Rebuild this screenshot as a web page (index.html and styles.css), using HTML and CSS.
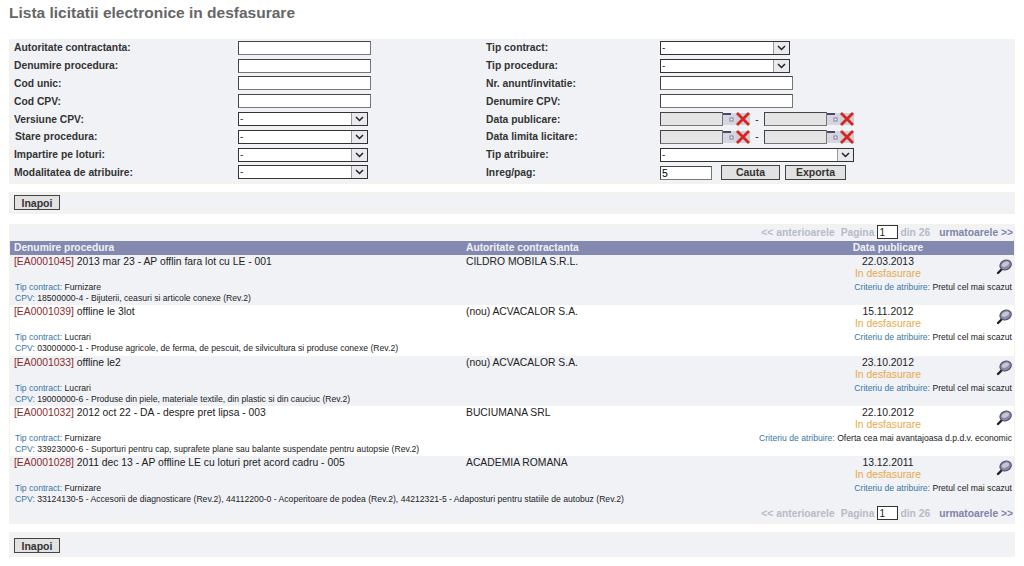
FILE: index.html
```html
<!DOCTYPE html>
<html lang="ro">
<head>
  <meta charset="UTF-8" />
  <title>Lista licitatii electronice in desfasurare</title>
  <link rel="stylesheet" href="styles.css">
</head>
<body>
  <svg class="defs" width="0" height="0">
    <symbol id="lupa" viewBox="0 0 16 16">
      <path d="M6 10 L2 14" stroke="#222" stroke-width="2.4" stroke-linecap="round"/>
      <ellipse cx="9.6" cy="6" rx="5.8" ry="4.8" transform="rotate(-25 9.6 6)" fill="#8c8ca6" stroke="#4f4f66" stroke-width="1.1"/>
      <ellipse cx="9.4" cy="5.2" rx="3.8" ry="2.2" transform="rotate(-25 9.4 5.2)" fill="#c6c7d6"/>
    </symbol>
    <symbol id="sageata" viewBox="0 0 15 12">
      <path d="M4 4 L7.5 7.5 L11 4" fill="none" stroke="#222" stroke-width="1.5"/>
    </symbol>
    <symbol id="cal" viewBox="0 0 13 14">
      <rect x="0" y="1" width="13" height="12" fill="#d6d6e2"/>
      <rect x="0" y="1" width="8" height="2" fill="#46466e"/>
      <rect x="7" y="6" width="3" height="3" fill="#fff" stroke="#7c7c92"/>
    </symbol>
    <symbol id="sterge" viewBox="0 0 14 14">
      <rect x="0" y="1" width="14" height="12" fill="#cfcfd8"/>
      <path d="M1 1 L13 13 M13 1 L1 13" stroke="#d8231f" stroke-width="2.8"/>
    </symbol>
  </svg>

  <h1 class="titlu">Lista licitatii electronice in desfasurare</h1>

  <form class="panou filtre">
    <div class="rand">
      <label>Autoritate contractanta:</label>
      <input class="txt" type="text">
      <label>Tip contract:</label>
      <div class="sel"><select><option>-</option></select><svg><use href="#sageata"/></svg></div>
    </div>
    <div class="rand">
      <label>Denumire procedura:</label>
      <input class="txt" type="text">
      <label>Tip procedura:</label>
      <div class="sel"><select><option>-</option></select><svg><use href="#sageata"/></svg></div>
    </div>
    <div class="rand">
      <label>Cod unic:</label>
      <input class="txt" type="text">
      <label>Nr. anunt/invitatie:</label>
      <input class="txt" type="text">
    </div>
    <div class="rand">
      <label>Cod CPV:</label>
      <input class="txt" type="text">
      <label>Denumire CPV:</label>
      <input class="txt" type="text">
    </div>
    <div class="rand">
      <label>Versiune CPV:</label>
      <div class="sel"><select><option>-</option></select><svg><use href="#sageata"/></svg></div>
      <label>Data publicare:</label>
      <div class="date">
        <input class="data" type="text" disabled><svg class="ic-cal"><use href="#cal"/></svg><svg class="ic-x"><use href="#sterge"/></svg>
        <span class="dash">-</span>
        <input class="data" type="text" disabled><svg class="ic-cal"><use href="#cal"/></svg><svg class="ic-x"><use href="#sterge"/></svg>
      </div>
    </div>
    <div class="rand">
      <label class="ind">Stare procedura:</label>
      <div class="sel"><select><option>-</option></select><svg><use href="#sageata"/></svg></div>
      <label>Data limita licitare:</label>
      <div class="date">
        <input class="data" type="text" disabled><svg class="ic-cal"><use href="#cal"/></svg><svg class="ic-x"><use href="#sterge"/></svg>
        <span class="dash">-</span>
        <input class="data" type="text" disabled><svg class="ic-cal"><use href="#cal"/></svg><svg class="ic-x"><use href="#sterge"/></svg>
      </div>
    </div>
    <div class="rand">
      <label>Impartire pe loturi:</label>
      <div class="sel"><select><option>-</option></select><svg><use href="#sageata"/></svg></div>
      <label>Tip atribuire:</label>
      <div class="sel lat"><select><option>-</option></select><svg><use href="#sageata"/></svg></div>
    </div>
    <div class="rand">
      <label>Modalitatea de atribuire:</label>
      <div class="sel"><select><option>-</option></select><svg><use href="#sageata"/></svg></div>
      <label>Inreg/pag:</label>
      <div class="actiuni">
        <input class="mic" type="text" value="5">
        <button type="button" class="btn cauta">Cauta</button>
        <button type="button" class="btn exporta">Exporta</button>
      </div>
    </div>
  </form>

  <div class="panou bara"><button type="button" class="btn inapoi">Inapoi</button></div>

  <div class="panou rezultate">
    <div class="pager">
      <span>&lt;&lt; anterioarele</span>
      <span>Pagina</span><input class="pg" type="text" value="1"><span>din 26</span>
      <a>urmatoarele &gt;&gt;</a>
    </div>

    <div class="cap">
      <span class="c-nume">Denumire procedura</span>
      <span class="c-aut">Autoritate contractanta</span>
      <span class="c-data">Data publicare</span>
    </div>

    <div class="lic">
      <div class="sus">
        <div class="c-nume"><b>[EA0001045]</b> 2013 mar 23 - AP offlin fara lot cu LE - 001</div>
        <div class="c-aut">CILDRO MOBILA S.R.L.</div>
        <div class="c-data">22.03.2013<em>In desfasurare</em></div>
        <svg class="lupa"><use href="#lupa"/></svg>
      </div>
      <div class="jos"><span><i>Tip contract:</i> Furnizare</span><span><i>Criteriu de atribuire:</i> Pretul cel mai scazut</span></div>
      <div class="cpv"><i>CPV:</i> 18500000-4 - Bijuterii, ceasuri si articole conexe (Rev.2)</div>
    </div>
    <div class="lic">
      <div class="sus">
        <div class="c-nume"><b>[EA0001039]</b> offline le 3lot</div>
        <div class="c-aut">(nou) ACVACALOR S.A.</div>
        <div class="c-data">15.11.2012<em>In desfasurare</em></div>
        <svg class="lupa"><use href="#lupa"/></svg>
      </div>
      <div class="jos"><span><i>Tip contract:</i> Lucrari</span><span><i>Criteriu de atribuire:</i> Pretul cel mai scazut</span></div>
      <div class="cpv"><i>CPV:</i> 03000000-1 - Produse agricole, de ferma, de pescuit, de silvicultura si produse conexe (Rev.2)</div>
    </div>
    <div class="lic">
      <div class="sus">
        <div class="c-nume"><b>[EA0001033]</b> offline le2</div>
        <div class="c-aut">(nou) ACVACALOR S.A.</div>
        <div class="c-data">23.10.2012<em>In desfasurare</em></div>
        <svg class="lupa"><use href="#lupa"/></svg>
      </div>
      <div class="jos"><span><i>Tip contract:</i> Lucrari</span><span><i>Criteriu de atribuire:</i> Pretul cel mai scazut</span></div>
      <div class="cpv"><i>CPV:</i> 19000000-6 - Produse din piele, materiale textile, din plastic si din cauciuc (Rev.2)</div>
    </div>
    <div class="lic">
      <div class="sus">
        <div class="c-nume"><b>[EA0001032]</b> 2012 oct 22 - DA - despre pret lipsa - 003</div>
        <div class="c-aut">BUCIUMANA SRL</div>
        <div class="c-data">22.10.2012<em>In desfasurare</em></div>
        <svg class="lupa"><use href="#lupa"/></svg>
      </div>
      <div class="jos"><span><i>Tip contract:</i> Furnizare</span><span><i>Criteriu de atribuire:</i> Oferta cea mai avantajoasa d.p.d.v. economic</span></div>
      <div class="cpv"><i>CPV:</i> 33923000-6 - Suporturi pentru cap, suprafete plane sau balante suspendate pentru autopsie (Rev.2)</div>
    </div>
    <div class="lic">
      <div class="sus">
        <div class="c-nume"><b>[EA0001028]</b> 2011 dec 13 - AP offline LE cu loturi pret acord cadru - 005</div>
        <div class="c-aut">ACADEMIA ROMANA</div>
        <div class="c-data">13.12.2011<em>In desfasurare</em></div>
        <svg class="lupa"><use href="#lupa"/></svg>
      </div>
      <div class="jos"><span><i>Tip contract:</i> Furnizare</span><span><i>Criteriu de atribuire:</i> Pretul cel mai scazut</span></div>
      <div class="cpv"><i>CPV:</i> 33124130-5 - Accesorii de diagnosticare (Rev.2), 44112200-0 - Acoperitoare de podea (Rev.2), 44212321-5 - Adaposturi pentru statiile de autobuz (Rev.2)</div>
    </div>

    <div class="pager">
      <span>&lt;&lt; anterioarele</span>
      <span>Pagina</span><input class="pg" type="text" value="1"><span>din 26</span>
      <a>urmatoarele &gt;&gt;</a>
    </div>
  </div>

  <div class="panou bara ultima"><button type="button" class="btn inapoi">Inapoi</button></div>
</body>
</html>
```

FILE: styles.css
```css
html {
  overflow: hidden;
}
body {
  font-family: "Liberation Sans", Arial, sans-serif;
  background-color: #fff;
  margin: 0;
  padding: 0 9px;
  width: 1006px;
  color: #222;
}
.defs {
  position: absolute;
}
.titlu {
  font-size: 15.5px;
  line-height: 18px;
  color: #666;
  margin: 0;
  padding: 4px 0 17px 0;
}
.panou {
  background-color: #f0f2f6;
  border: 1px solid #f6f3e6;
  box-sizing: border-box;
}

/* filtre */
.filtre {
  height: 145px;
  border-top: 0;
  padding: 0 0 0 4px;
}
.rand {
  display: grid;
  grid-template-columns: 224px 248px 174px 1fr;
  height: 17.8px;
  align-items: center;
}
.rand label {
  font-size: 10.3px;
  font-weight: bold;
  color: #333;
}
.rand .ind {
  padding-left: 1px;
}
input, select {
  font-family: "Liberation Sans", Arial, sans-serif;
  box-sizing: border-box;
  border: 1px solid #777;
  border-top-color: #444;
  border-left-color: #444;
  border-radius: 0;
  outline: none;
  background: #fff;
  padding: 0 0 0 1px;
  margin: 0;
}
.txt {
  width: 133px;
  height: 14px;
}
.sel {
  position: relative;
  width: 130px;
  height: 14px;
}
.sel.lat {
  width: 194px;
}
.sel select {
  appearance: none;
  display: block;
  width: 100%;
  height: 100%;
  font-size: 10px;
  line-height: 12px;
  color: #333;
  border-color: #333;
}
.sel svg {
  position: absolute;
  right: 1px;
  top: 1px;
  width: 15px;
  height: 12px;
  background: #e9e9ee;
  border-left: 1px solid #999;
}
.date {
  display: flex;
  align-items: center;
  height: 14px;
}
.data {
  width: 63px;
  height: 14px;
  background: #e4e4e4;
}
.ic-cal {
  width: 13px;
  height: 14px;
}
.ic-x {
  width: 14px;
  height: 14px;
}
.dash {
  font-size: 10px;
  width: 14px;
  text-align: center;
}
.actiuni {
  display: flex;
  align-items: center;
  height: 16px;
}
.mic {
  width: 52px;
  height: 14px;
  margin-top: 2px;
  font-size: 10.5px;
  margin-right: 9px;
}
.btn {
  font-family: "Liberation Sans", Arial, sans-serif;
  font-size: 10.5px;
  font-weight: bold;
  color: #333;
  background: #e2e2e2;
  border: 1px solid #444;
  border-radius: 0;
  height: 15px;
  line-height: 12px;
  padding: 0;
}
.cauta {
  width: 59px;
  margin-right: 5px;
}
.exporta {
  width: 61px;
}

/* bare cu butonul inapoi */
.bara {
  height: 22px;
  margin-top: 8px;
  padding: 2px 0 0 4px;
}
.ultima {
  height: 25px;
  margin-top: 8px;
  padding-top: 5px;
}
.inapoi {
  width: 46px;
  display: block;
}

/* lista */
.rezultate {
  height: 300px;
  margin-top: 10px;
}
.pager {
  display: flex;
  justify-content: flex-end;
  align-items: center;
  height: 14px;
  padding: 0 1px 2px 0;
  font-size: 10.3px;
  font-weight: bold;
  color: #b8bbc4;
}
.pager span {
  margin-right: 9px;
}
.pager span:first-child {
  margin-right: 6px;
}
.pager span:nth-of-type(2) {
  margin-right: 3px;
}
.pager a {
  color: #7f84a8;
}
.pg {
  width: 21px;
  height: 14px;
  font-size: 10px;
  line-height: 12px;
  font-weight: normal;
  color: #222;
  border-color: #333;
  margin-right: 2px;
}
.cap {
  display: flex;
  height: 14px;
  line-height: 14px;
  background-color: #8489b0;
  color: #f1f1f6;
  font-size: 10.25px;
  font-weight: bold;
}
.c-nume {
  width: 456px;
  padding-left: 4px;
  box-sizing: border-box;
}
.c-aut {
  width: 319px;
}
.c-data {
  width: 206px;
  text-align: center;
}
.lic {
  height: 50.3px;
  box-sizing: border-box;
  padding-top: 1px;
}
.lic:nth-of-type(even) {
  background-color: #fff;
}
.sus {
  display: flex;
  position: relative;
  font-size: 10.35px;
  line-height: 12px;
  height: 26px;
}
.c-nume b {
  font-weight: normal;
  color: #8a2d2d;
}
.c-data em {
  display: block;
  font-style: normal;
  line-height: 11px;
  color: #e8a948;
}
.lupa {
  position: absolute;
  right: 2px;
  top: 3px;
  width: 16px;
  height: 16px;
}
.jos {
  display: flex;
  justify-content: space-between;
  padding: 0 2px 0 5px;
  font-size: 8.65px;
  line-height: 11px;
}
.cpv {
  padding-left: 5px;
  font-size: 8.65px;
  line-height: 11px;
}
.jos i, .cpv i {
  font-style: normal;
  color: #3a77a4;
}
```
